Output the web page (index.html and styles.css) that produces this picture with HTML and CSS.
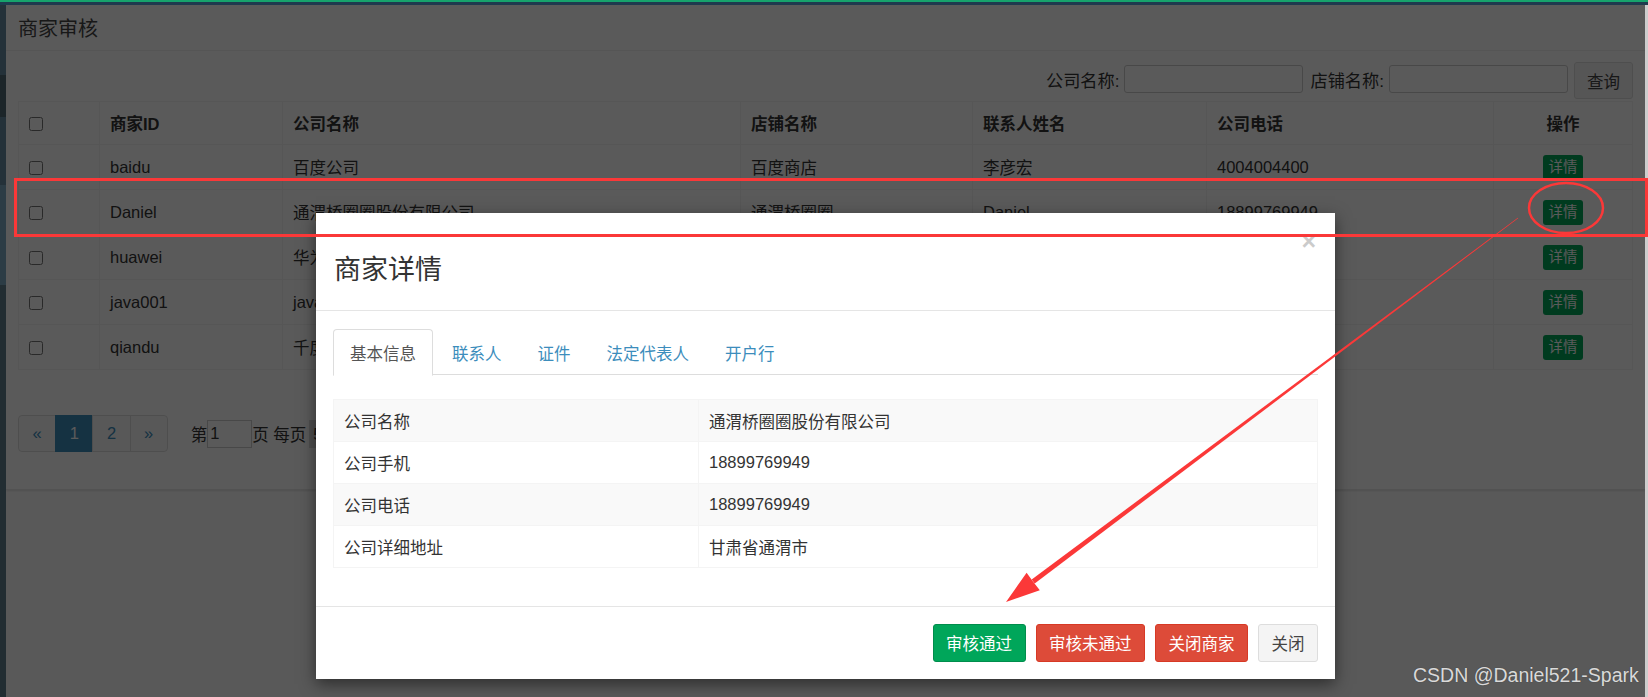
FILE: index.html
```html
<!DOCTYPE html>
<html lang="zh-CN">
<head>
<meta charset="utf-8">
<title>商家审核</title>
<link rel="stylesheet" href="styles.css">
</head>
<body>
<div class="topbar"></div>
<div class="shell">
  <aside class="side-strip">
    <div class="seg seg-a"></div>
    <div class="seg seg-b"></div>
    <div class="seg seg-a2"></div>
    <div class="seg seg-c"></div>
    <div class="seg seg-d"></div>
  </aside>
  <main class="frame">
    <section class="box">
      <header class="box-header"><h3 class="box-title">商家审核</h3></header>
      <div class="box-body">
        <form class="search">
          <label class="search-label">公司名称:</label>
          <input class="search-input" type="text">
          <label class="search-label">店铺名称:</label>
          <input class="search-input" type="text">
          <button type="button" class="btn-default search-btn">查询</button>
        </form>
        <table class="grid">
          <colgroup>
            <col style="width:81px"><col style="width:183px"><col style="width:458px"><col style="width:232px"><col style="width:234px"><col style="width:287px"><col>
          </colgroup>
          <thead>
            <tr><th><input type="checkbox" class="chk"></th><th>商家ID</th><th>公司名称</th><th>店铺名称</th><th>联系人姓名</th><th>公司电话</th><th class="center">操作</th></tr>
          </thead>
          <tbody>
            <tr><td><input type="checkbox" class="chk"></td><td>baidu</td><td>百度公司</td><td>百度商店</td><td>李彦宏</td><td>4004004400</td><td class="center"><span class="btn-xs">详情</span></td></tr>
            <tr><td><input type="checkbox" class="chk"></td><td>Daniel</td><td>通渭桥圈圈股份有限公司</td><td>通渭桥圈圈</td><td>Daniel</td><td>18899769949</td><td class="center"><span class="btn-xs">详情</span></td></tr>
            <tr><td><input type="checkbox" class="chk"></td><td>huawei</td><td>华为</td><td>华为商城</td><td>任正非</td><td></td><td class="center"><span class="btn-xs">详情</span></td></tr>
            <tr><td><input type="checkbox" class="chk"></td><td>java001</td><td>java</td><td>java商店</td><td>张三</td><td>13800138000</td><td class="center"><span class="btn-xs">详情</span></td></tr>
            <tr><td><input type="checkbox" class="chk"></td><td>qiandu</td><td>千度</td><td></td><td>李四</td><td>13900139000</td><td class="center"><span class="btn-xs">详情</span></td></tr>
          </tbody>
        </table>
        <div class="pager-row">
          <ul class="pagination">
            <li><a>«</a></li>
            <li class="active"><a>1</a></li>
            <li><a>2</a></li>
            <li><a>»</a></li>
          </ul>
          <span class="pager-text">第</span><input class="page-input" type="text" value="1"><span class="pager-text">页 每页</span><span class="page-size">5</span><span class="pager-text">条</span>
        </div>
      </div>
    </section>

    <div class="backdrop"></div>

    <div class="modal-wrap">
      <div class="modal">
        <div class="modal-header">
          <h3 class="modal-title">商家详情</h3>
          <button type="button" class="close">×</button>
        </div>
        <div class="modal-body">
          <ul class="tabs">
            <li class="active"><a>基本信息</a></li>
            <li><a>联系人</a></li>
            <li><a>证件</a></li>
            <li><a>法定代表人</a></li>
            <li><a>开户行</a></li>
          </ul>
          <table class="info">
            <tr><td class="k">公司名称</td><td>通渭桥圈圈股份有限公司</td></tr>
            <tr><td class="k">公司手机</td><td>18899769949</td></tr>
            <tr><td class="k">公司电话</td><td>18899769949</td></tr>
            <tr><td class="k">公司详细地址</td><td>甘肃省通渭市</td></tr>
          </table>
        </div>
        <div class="modal-footer">
          <button type="button" class="btn btn-success">审核通过</button>
          <button type="button" class="btn btn-danger">审核未通过</button>
          <button type="button" class="btn btn-danger">关闭商家</button>
          <button type="button" class="btn btn-plain">关闭</button>
        </div>
      </div>
    </div>
  </main>
  <div class="scroll-strip"></div>
</div>

<svg class="annot" width="1648" height="697" viewBox="0 0 1648 697">
  <rect x="15.5" y="179.5" width="1631" height="56" fill="none" stroke="#fb3838" stroke-width="3"/>
  <ellipse cx="1566" cy="208" rx="37" ry="25" fill="none" stroke="#fb3838" stroke-width="2.5"/>
  <polygon fill="#fb3838" points="1518.2,218.2 1517.8,217.8 1031.7,579.5 1034.7,583.5"/>
  <polygon fill="#fb3838" points="1006,602 1039.8,590.3 1033,581.5 1026.6,572.7"/>
</svg>
<div class="watermark">CSDN @Daniel521-Spark</div>
</body>
</html>
```

FILE: styles.css
```css
* { box-sizing: border-box; }

html, body {
  margin: 0;
  padding: 0;
  width: 1648px;
  height: 697px;
  overflow: hidden;
}

body {
  position: relative;
  font-family: "Liberation Sans", "Noto Sans CJK SC", sans-serif;
  font-size: 16.5px;
  color: #333;
  background: #222d32;
}

.topbar {
  height: 5px;
  border-top: 2px solid #17a36c;
  background: #1f3a4e;
}

.shell {
  display: flex;
  height: 692px;
}

.side-strip {
  width: 6px;
  display: flex;
  flex-direction: column;
}
.seg-a { height: 70px; background: #243139; }
.seg-b { height: 42px; background: #1c2529; }
.seg-a2 { height: 68px; background: #243139; }
.seg-c { height: 100px; background: #2c3c45; }
.seg-d { flex: 1; background: #222d32; }

.scroll-strip {
  width: 3px;
  background: #cdcdcd;
}

.frame {
  position: relative;
  flex: 1;
  background: #fdfdfd;
  overflow: hidden;
}

/* ---------- page box ---------- */
.box {
  background: #fff;
  border-bottom: 1px solid #e9e9e9;
  box-shadow: 0 1px 2px rgba(0,0,0,0.12);
}

.box-header {
  height: 46px;
  border-bottom: 1px solid #f0f0f0;
  padding: 0 12px;
  display: flex;
  align-items: center;
}

.box-title {
  margin: 0;
  font-size: 20px;
  font-weight: normal;
  color: #444;
}

.box-body {
  padding: 0 12px 37px;
}

.search {
  height: 50px;
  padding-top: 6px;
  display: flex;
  justify-content: flex-end;
  align-items: center;
}

.search-label {
  font-size: 17.2px;
  margin-right: 5px;
  margin-left: 7px;
}

.search-input {
  width: 179px;
  height: 28px;
  border: 1px solid #ccc;
  border-radius: 3px;
  background: #fff;
}

.search-btn {
  margin-left: 6px;
  width: 59px;
  height: 37px;
  margin-top: 3px;
}

.btn-default {
  background: #f4f4f4;
  border: 1px solid #ddd;
  border-radius: 3px;
  color: #444;
  font: inherit;
}

/* ---------- grid ---------- */
.grid {
  width: 100%;
  border-collapse: collapse;
  table-layout: fixed;
}

.grid th,
.grid td {
  border: 1px solid #f2f2f2;
  padding: 0 10px;
  text-align: left;
  vertical-align: middle;
  white-space: nowrap;
  overflow: hidden;
}

.grid th { font-weight: bold; }
.grid thead tr { height: 43px; }
.grid tbody tr { height: 45px; }
.grid .center { text-align: center; }

.chk {
  margin: 0;
  width: 14px;
  height: 14px;
  vertical-align: middle;
}

.btn-xs {
  display: inline-block;
  padding: 0 6px;
  height: 25px;
  line-height: 25px;
  font-size: 14.4px;
  border-radius: 3px;
  background: #00a65a;
  color: #fff;
  vertical-align: middle;
}

/* ---------- pager ---------- */
.pager-row {
  margin-top: 45px;
  display: flex;
  align-items: center;
  height: 37px;
}

.pagination {
  list-style: none;
  margin: 0 23px 0 0;
  padding: 0;
  display: flex;
}

.pagination a {
  display: flex;
  align-items: center;
  justify-content: center;
  height: 37px;
  padding: 0 13.5px;
  border: 1px solid #ddd;
  margin-left: -1px;
  color: #3c8dbc;
  background: #fafafa;
}

.pagination li:first-child a { border-radius: 4px 0 0 4px; margin-left: 0; }
.pagination li:last-child a { border-radius: 0 4px 4px 0; }
.pagination .active a {
  background: #3c8dbc;
  border-color: #3c8dbc;
  color: #fff;
}

.page-input {
  width: 45px;
  height: 28px;
  border: 1px solid #ccc;
  font: inherit;
  padding: 0 2px;
  color: #333;
}

.page-size {
  display: inline-block;
  height: 28px;
  line-height: 28px;
  padding: 0 4px;
  margin-left: 3px;
  background: #ddd;
}

/* ---------- modal ---------- */
.backdrop {
  position: absolute;
  inset: 0;
  background: rgba(0, 0, 0, 0.647);
}

.modal-wrap {
  position: absolute;
  inset: 0;
}

.modal {
  position: relative;
  width: 1019px;
  margin: 208px auto 0;
  background: #fff;
  box-shadow: 0 5px 15px rgba(0,0,0,0.5);
}

.modal-header {
  position: relative;
  height: 98px;
  padding: 42px 18px 0;
  border-bottom: 1px solid #e5e5e5;
}

.modal-title {
  margin: 0;
  font-size: 27px;
  line-height: 30px;
  font-weight: normal;
  color: #333;
}

.close {
  position: absolute;
  top: 16px;
  right: 19px;
  padding: 0;
  border: 0;
  background: none;
  font-family: "Liberation Sans", sans-serif;
  font-size: 25px;
  font-weight: bold;
  line-height: 1;
  color: #000;
  opacity: 0.2;
}

.modal-body {
  padding: 18px 17px 0;
  height: 295px;
}

.tabs {
  list-style: none;
  margin: 0 0 24px;
  padding: 0;
  display: flex;
  border-bottom: 1px solid #ddd;
  height: 46px;
}

.tabs li {
  margin-right: 2px;
  margin-bottom: -1px;
}

.tabs a {
  display: flex;
  align-items: center;
  height: 47px;
  padding: 0 16px;
  border: 1px solid transparent;
  border-radius: 4px 4px 0 0;
  color: #3c8dbc;
}

.tabs .active a {
  color: #555;
  background: #fff;
  border-color: #ddd;
  border-bottom-color: #fff;
}

.info {
  width: 100%;
  border-collapse: collapse;
  border: 1px solid #f4f4f4;
}

.info td {
  height: 42px;
  padding: 0 10px;
  border: 1px solid #f4f4f4;
  vertical-align: middle;
}

.info td.k { width: 365px; }
.info tr:nth-child(odd) { background: #f9f9f9; }

.modal-footer {
  height: 73px;
  border-top: 1px solid #e5e5e5;
  padding: 0 17px;
  display: flex;
  justify-content: flex-end;
  align-items: center;
  gap: 10px;
}

.btn {
  height: 38px;
  padding: 0 12.5px;
  font: inherit;
  border: 1px solid transparent;
  border-radius: 3px;
  color: #fff;
}

.btn-success { background: #00a65a; border-color: #008d4c; }
.btn-danger { background: #dd4b39; border-color: #d73925; }
.btn-plain { background: #f4f4f4; border-color: #ddd; color: #444; }

/* ---------- annotations ---------- */
.annot {
  position: absolute;
  left: 0;
  top: 0;
  pointer-events: none;
}

.watermark {
  position: absolute;
  left: 1413px;
  top: 664px;
  font-family: "Liberation Sans", sans-serif;
  font-size: 19.5px;
  color: rgba(255,255,255,0.82);
  text-shadow: 0 0 1px rgba(0,0,0,0.4);
  white-space: nowrap;
}
```
